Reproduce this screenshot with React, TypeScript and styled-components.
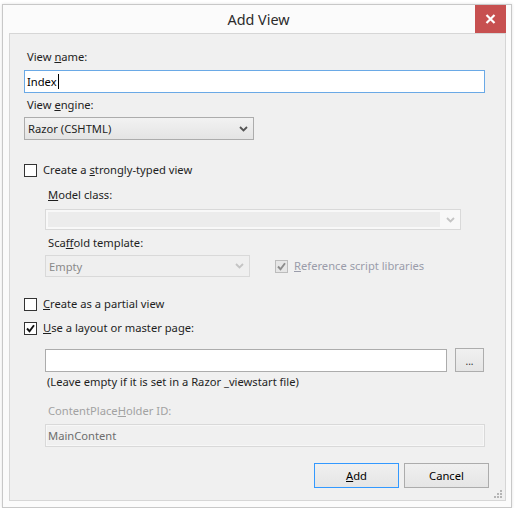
import styled, { createGlobalStyle } from "styled-components";

const GlobalStyle = createGlobalStyle`
  html, body {
    margin: 0;
    background: #ffffff;
  }
  body {
    font-family: "Noto Sans", "Open Sans", sans-serif;
    font-size: 11.2px;
    color: #1e1e1e;
  }
`;

const Window = styled.div`
  box-sizing: border-box;
  margin: 4px 0 0 2px;
  width: 510px;
  height: 504px;
  border: 1px solid #c8c8c8;
  background: #fbfbfb;
  box-shadow: 0 0 3px rgba(0, 0, 0, 0.12);
  display: flex;
  flex-direction: column;
  padding: 0 5px 6px 6px;
`;

const TitleBar = styled.div`
  position: relative;
  height: 28px;
  display: flex;
  align-items: center;
  justify-content: center;
  font-size: 14.4px;
  color: #2b2b2b;
  padding-left: 2px;
`;

const CloseButton = styled.div`
  position: absolute;
  top: 0;
  right: 0;
  width: 31px;
  height: 28px;
  background: #c75050;
  display: flex;
  align-items: center;
  justify-content: center;
`;

const Panel = styled.div`
  position: relative;
  flex: 1;
  box-sizing: border-box;
  border: 1px solid #d6d6d6;
  background: #f0f0f0;
  padding: 0 0 0 14px;
  display: flex;
  flex-direction: column;
  align-items: flex-start;
`;

const Label = styled.div<{ $top: number; $indent?: number; $disabled?: boolean }>`
  margin-top: ${(p) => p.$top}px;
  margin-left: ${(p) => (p.$indent ?? 0) + 3}px;
  line-height: 16px;
  height: 16px;
  white-space: nowrap;
  color: ${(p) => (p.$disabled ? "#a2a2a2" : "#1e1e1e")};
`;

const Hint = styled(Label)`
  margin-left: ${(p) => (p.$indent ?? 0) + 2}px;
`;

const TextBox = styled.div<{
  $top: number;
  $width: number;
  $indent?: number;
  $focused?: boolean;
  $disabled?: boolean;
}>`
  box-sizing: border-box;
  margin-top: ${(p) => p.$top}px;
  margin-left: ${(p) => p.$indent ?? 0}px;
  width: ${(p) => p.$width}px;
  height: 23px;
  border: 1px solid
    ${(p) => (p.$focused ? "#6aa9e6" : p.$disabled ? "#d9d9d9" : "#acacac")};
  background: ${(p) => (p.$disabled ? "#f0f0f0" : "#ffffff")};
  box-shadow: ${(p) => (p.$disabled ? "inset 0 0 0 1px #f7f7f7" : "none")};
  color: ${(p) => (p.$disabled ? "#6d6d6d" : "#000000")};
  display: flex;
  align-items: center;
  padding-left: 2px;
  line-height: 16px;
`;

const Caret = styled.span`
  display: inline-block;
  width: 1px;
  height: 15px;
  background: #000;
  margin-left: 1px;
`;

const Combo = styled.div<{
  $top: number;
  $width: number;
  $height: number;
  $indent?: number;
  $disabled?: boolean;
}>`
  box-sizing: border-box;
  margin-top: ${(p) => p.$top}px;
  margin-left: ${(p) => p.$indent ?? 0}px;
  width: ${(p) => p.$width}px;
  height: ${(p) => p.$height}px;
  border: 1px solid ${(p) => (p.$disabled ? "#d9d9d9" : "#acacac")};
  background: ${(p) =>
    p.$disabled ? "#efefef" : "linear-gradient(#f2f2f2, #e4e4e4)"};
  color: ${(p) => (p.$disabled ? "#8a8a8a" : "#1e1e1e")};
  display: flex;
  align-items: center;
  justify-content: space-between;
  padding: 0 5px 0 3px;
`;

const EditableCombo = styled.div<{ $top: number; $width: number; $indent: number }>`
  box-sizing: border-box;
  margin-top: ${(p) => p.$top}px;
  margin-left: ${(p) => p.$indent}px;
  width: ${(p) => p.$width}px;
  height: 21px;
  border: 1px solid #d9d9d9;
  background: #f8f8f8;
  display: flex;
  align-items: center;
  padding: 2px 5px 2px 2px;
  gap: 6px;
`;

const EditArea = styled.div`
  flex: 1;
  height: 100%;
  background: #ececec;
`;

const Row = styled.div<{ $top: number; $indent?: number }>`
  margin-top: ${(p) => p.$top}px;
  margin-left: ${(p) => p.$indent ?? 0}px;
  display: flex;
  align-items: center;
`;

const CheckRow = styled.div<{ $top: number; $indent?: number }>`
  margin-top: ${(p) => p.$top}px;
  margin-left: ${(p) => p.$indent ?? 0}px;
  display: flex;
  align-items: center;
  height: 16px;
  gap: 6px;
`;

const Box = styled.div<{ $disabled?: boolean }>`
  box-sizing: border-box;
  width: 13px;
  height: 13px;
  border: 1px solid ${(p) => (p.$disabled ? "#bcbcbc" : "#333333")};
  background: ${(p) => (p.$disabled ? "#e6e6e6" : "#ffffff")};
  display: flex;
  align-items: center;
  justify-content: center;
`;

const CheckText = styled.span<{ $disabled?: boolean }>`
  line-height: 16px;
  white-space: nowrap;
  color: ${(p) => (p.$disabled ? "#9a9caa" : "#1e1e1e")};
`;

const DotsButton = styled.div`
  box-sizing: border-box;
  margin-left: 8px;
  width: 29px;
  height: 24px;
  border: 1px solid #adadad;
  background: linear-gradient(#f0f0f0, #e5e5e5);
  display: flex;
  align-items: flex-end;
  justify-content: center;
  padding-bottom: 5px;
  font-size: 10px;
  line-height: 10px;
  color: #333;
`;

const ButtonRow = styled.div`
  margin-top: 16px;
  margin-left: 290px;
  display: flex;
  gap: 5px;
`;

const Button = styled.div<{ $default?: boolean }>`
  box-sizing: border-box;
  width: 85px;
  height: 25px;
  border: 1px solid ${(p) => (p.$default ? "#3399ff" : "#acacac")};
  background: linear-gradient(#f0f0f0, #e5e5e5);
  display: flex;
  align-items: center;
  justify-content: center;
  color: #000;
  line-height: 16px;
`;

const Grip = styled.svg`
  position: absolute;
  right: 3px;
  bottom: 2px;
`;

const Chevron = ({ color }: { color: string }) => (
  <svg width="9" height="6" viewBox="0 0 9 6">
    <path d="M1 1 L4.5 4.5 L8 1" fill="none" stroke={color} strokeWidth="1.8" />
  </svg>
);

const Check = ({ color }: { color: string }) => (
  <svg width="9" height="9" viewBox="0 0 9 9">
    <path d="M1 4.5 L3.5 7.2 L8 1.2" fill="none" stroke={color} strokeWidth="1.9" />
  </svg>
);

export default function App() {
  return (
    <>
      <GlobalStyle />
      <Window>
        <TitleBar>
          Add View
          <CloseButton>
            <svg width="11" height="10" viewBox="0 0 11 10">
              <path d="M1.5 1 L9.5 9 M9.5 1 L1.5 9" stroke="#fff" strokeWidth="2.2" />
            </svg>
          </CloseButton>
        </TitleBar>
        <Panel>
          <Label $top={15}>
            View <u>n</u>ame:
          </Label>
          <TextBox $top={5} $width={461} $focused>
            Index
            <Caret />
          </TextBox>
          <Label $top={4}>
            View <u>e</u>ngine:
          </Label>
          <Combo $top={4} $width={230} $height={23}>
            <span>Razor (CSHTML)</span>
            <Chevron color="#555" />
          </Combo>

          <CheckRow $top={22}>
            <Box />
            <CheckText>
              Create a <u>s</u>trongly-typed view
            </CheckText>
          </CheckRow>
          <Label $top={9} $indent={21}>
            <u>M</u>odel class:
          </Label>
          <EditableCombo $top={6} $width={416} $indent={21}>
            <EditArea />
            <Chevron color="#c4c4c4" />
          </EditableCombo>
          <Label $top={5} $indent={21}>
            Sca<u>f</u>fold template:
          </Label>
          <Row $top={4} $indent={21}>
            <Combo $top={0} $width={205} $height={22} $disabled>
              <span>Empty</span>
              <Chevron color="#c4c4c4" />
            </Combo>
            <CheckRow $top={0} $indent={25}>
              <Box $disabled>
                <Check color="#8c8c8c" />
              </Box>
              <CheckText $disabled>
                <u>R</u>eference script libraries
              </CheckText>
            </CheckRow>
          </Row>

          <CheckRow $top={19}>
            <Box />
            <CheckText>
              <u>C</u>reate as a partial view
            </CheckText>
          </CheckRow>
          <CheckRow $top={8}>
            <Box>
              <Check color="#111" />
            </Box>
            <CheckText>
              <u>U</u>se a layout or master page:
            </CheckText>
          </CheckRow>
          <Row $top={12} $indent={21}>
            <TextBox $top={0} $width={402} />
            <DotsButton>...</DotsButton>
          </Row>
          <Hint $top={2} $indent={21}>
            (Leave empty if it is set in a Razor _viewstart file)
          </Hint>
          <Label $top={13} $indent={21} $disabled>
            ContentPlace<u>H</u>older ID:
          </Label>
          <TextBox $top={5} $width={440} $indent={21} $disabled>
            MainContent
          </TextBox>
          <ButtonRow>
            <Button $default>
              <span>
                <u>A</u>dd
              </span>
            </Button>
            <Button>Cancel</Button>
          </ButtonRow>
          <Grip width="8" height="8" viewBox="0 0 8 8">
            <rect x="6" y="0" width="2" height="2" fill="#b5b5b5" />
            <rect x="3" y="3" width="2" height="2" fill="#b5b5b5" />
            <rect x="6" y="3" width="2" height="2" fill="#b5b5b5" />
            <rect x="0" y="6" width="2" height="2" fill="#b5b5b5" />
            <rect x="3" y="6" width="2" height="2" fill="#b5b5b5" />
            <rect x="6" y="6" width="2" height="2" fill="#b5b5b5" />
          </Grip>
        </Panel>
      </Window>
    </>
  );
}
